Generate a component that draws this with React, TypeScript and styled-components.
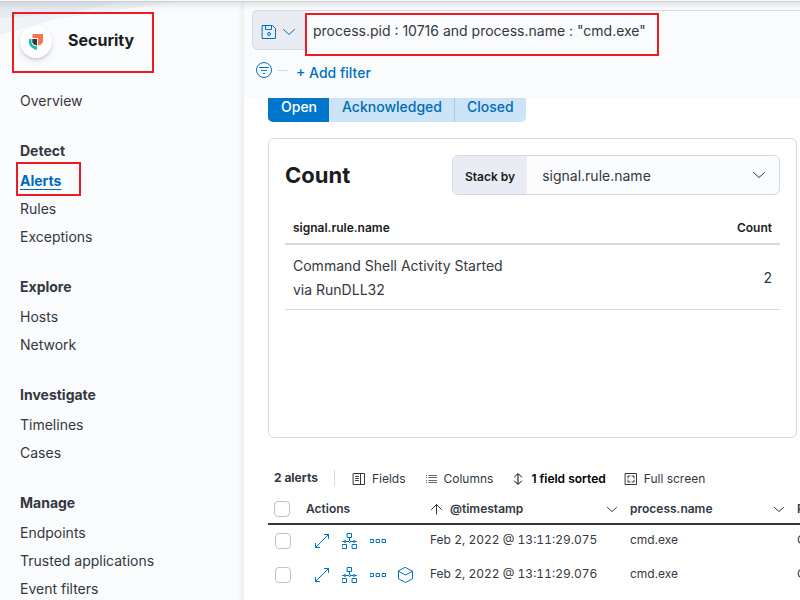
import React from "react";
import styled, { createGlobalStyle, css } from "styled-components";

const Global = createGlobalStyle`
  *, *::before, *::after { box-sizing: border-box; }
  body {
    margin: 0;
    background: #fff;
    color: #343741;
    font-family: Inter, "Open Sans", sans-serif;
    font-size: 14px;
    line-height: 24px;
    overflow: hidden;
  }
  button, input, select { font: inherit; color: inherit; }
  button { padding: 0; border: 0; background: none; cursor: pointer; }
  svg { display: block; flex: none; }
`;

const Page = styled.div`
  position: relative;
  display: grid;
  grid-template-columns: 244px minmax(0, 1fr);
  height: 100vh;
  padding-top: 2px;
  overflow: hidden;
`;

const TopShade = styled.div`
  position: absolute;
  inset: 0 0 auto;
  height: 10px;
  z-index: 3;
  pointer-events: none;
  background: linear-gradient(rgba(70, 90, 90, 0.14), rgba(70, 90, 90, 0));
  border-top: 1px solid #f7f9f9;
  &::after {
    content: "";
    display: block;
    height: 1px;
    background: #c9d1d3;
  }
`;

const Sidebar = styled.aside`
  position: relative;
  padding: 10px 12px 0;
  overflow: hidden;
  background: linear-gradient(to left, #eceef1, #fafbfd 6px);
`;

const Backdrop = styled.svg`
  position: absolute;
  top: 0;
  left: 0;
`;

const highlight = css`
  border: 2px solid #ec1c24;
`;

const Brand = styled.header`
  ${highlight}
  position: relative;
  display: flex;
  align-items: flex-start;
  gap: 16px;
  width: 142px;
  height: 61px;
  padding: 12px 6px;
`;

const BrandIcon = styled.span`
  display: grid;
  place-items: center;
  width: 32px;
  height: 32px;
  border-radius: 50%;
  background: #fff;
  box-shadow: 0 2px 3px rgba(60, 70, 90, 0.2), 0 4px 8px rgba(60, 70, 90, 0.06);
`;

const BrandName = styled.h1`
  margin: 0;
  color: #1a1c21;
  font-size: 16px;
  line-height: 28px;
  font-weight: 700;
`;

const Nav = styled.nav`
  display: flex;
  flex-direction: column;
  gap: 24px;
  padding: 14px 8px 0;
`;

const NavTitle = styled.h2`
  margin: 0 0 4px;
  font-size: 14px;
  line-height: 24px;
  font-weight: 700;
`;

const NavList = styled.ul`
  margin: 0;
  padding: 0;
  list-style: none;
`;

const NavLink = styled.a<{ $active?: boolean }>`
  position: relative;
  display: block;
  width: fit-content;
  line-height: 28px;
  white-space: nowrap;
  color: ${(p) => (p.$active ? "#006bb8" : "#343741")};
  font-weight: ${(p) => (p.$active ? 700 : 400)};
  text-decoration: ${(p) => (p.$active ? "underline" : "none")};
  text-underline-offset: 3px;
  ${(p) =>
    p.$active &&
    css`
      &::after {
        content: "";
        position: absolute;
        inset: -5px -20px -1px -4px;
        ${highlight}
      }
    `}
`;

const Main = styled.main`
  display: flex;
  flex-direction: column;
  min-width: 0;
  overflow: hidden;
`;

const SearchArea = styled.section`
  flex: none;
  height: 96px;
  padding: 8px 0 0 8px;
  background: #fafbfd;
`;

const QueryBar = styled.div`
  display: flex;
  height: 40px;
  border-top: 1px solid #d3dae6;
  border-top-left-radius: 6px;
`;

const SavedQuery = styled.button`
  display: flex;
  align-items: center;
  gap: 4px;
  width: 54px;
  margin-top: -1px;
  padding: 3px 0 0 8px;
  color: #0071c2;
  background: #e9edf3;
  border: 1px solid #d3dae6;
  border-right: 0;
  border-radius: 6px 0 0 6px;
`;

const QueryInput = styled.div`
  position: relative;
  flex: 1;
  input {
    width: 100%;
    height: 38px;
    padding: 0 8px 0 7px;
    border: 0;
    outline: 0;
    background: transparent;
  }
  &::after {
    content: "";
    position: absolute;
    top: 2px;
    left: -1px;
    width: 354px;
    height: 43px;
    pointer-events: none;
    ${highlight}
  }
`;

const FilterRow = styled.div`
  display: flex;
  align-items: center;
  height: 40px;
  padding: 0 4px;
  color: #0071c2;
`;

const FilterDash = styled.span`
  width: 10px;
  height: 1px;
  margin: 0 8px 0 6px;
  background: #d3dae6;
`;

const AddFilter = styled.button`
  padding-top: 5px;
  font-weight: 500;
`;

const Content = styled.div`
  flex: 1;
  min-height: 0;
  padding: 0 3px 0 24px;
`;

const StatusGroup = styled.div`
  display: flex;
  align-items: flex-end;
  width: fit-content;
  height: 24px;
  overflow: hidden;
  border-radius: 0 0 5px 5px;
`;

const StatusButton = styled.button<{ $selected?: boolean }>`
  height: 30px;
  padding: 0 12px;
  font-weight: 500;
  color: ${(p) => (p.$selected ? "#fff" : "#006bb8")};
  background: ${(p) => (p.$selected ? "#0077cc" : "#cce4f5")};
  border-left: 1px solid ${(p) => (p.$selected ? "#0077cc" : "#cce4f5")};
  &:last-child { border-left-color: #a3cdee; }
`;

const Panel = styled.section`
  min-height: 300px;
  margin-top: 16px;
  padding: 16px;
  border: 1px solid #d3dae6;
  border-radius: 6px;
`;

const PanelHead = styled.div`
  display: flex;
  align-items: center;
  justify-content: space-between;
`;

const PanelTitle = styled.h2`
  margin: 0;
  color: #1a1c21;
  font-size: 22px;
  line-height: 32px;
  font-weight: 700;
`;

const StackBy = styled.div`
  display: flex;
  position: relative;
  width: 328px;
  height: 40px;
  overflow: hidden;
  color: #343741;
  background: #fbfcfd;
  border: 1px solid #d3dae6;
  border-radius: 6px;
  label {
    padding: 2px 12px 0;
    color: #1a1c21;
    background: #e9edf3;
    font-size: 12px;
    line-height: 38px;
    font-weight: 600;
    white-space: nowrap;
  }
  select {
    flex: 1;
    min-width: 0;
    padding: 2px 40px 0 15px;
    appearance: none;
    border: 0;
    outline: 0;
    background: transparent;
  }
  svg {
    position: absolute;
    top: 11px;
    right: 12px;
    pointer-events: none;
  }
`;

const CountTable = styled.table`
  width: 100%;
  margin-top: 16px;
  border-collapse: collapse;
  th {
    padding: 5px 8px 3px;
    color: #1a1c21;
    border-bottom: 2px solid #d3dae6;
    font-size: 12px;
    font-weight: 600;
    text-align: left;
  }
  td {
    padding: 9px 8px 7px;
    border-bottom: 1px solid #d3dae6;
  }
  td:first-child { width: 50%; }
  th:last-child, td:last-child { text-align: right; }
`;

const Toolbar = styled.div`
  display: flex;
  align-items: center;
  height: 24px;
  margin-top: 28px;
  padding-left: 6px;
  font-size: 12px;
  white-space: nowrap;
`;

const AlertTotal = styled.strong`
  padding-right: 16px;
  font-weight: 700;
`;

const Divider = styled.span`
  width: 1px;
  height: 16px;
  margin-right: 17px;
  background: #d3dae6;
`;

const ToolButton = styled.button<{ $strong?: boolean }>`
  display: flex;
  align-items: center;
  gap: 6px;
  margin-right: 18px;
  padding-top: 2px;
  ${(p) => p.$strong && css`color: #000; font-weight: 600;`}
`;

const Grid = styled.table`
  width: 700px;
  table-layout: fixed;
  border-collapse: separate;
  border-spacing: 0;
  font-size: 12px;
  th {
    height: 35px;
    padding: 4px 0 0;
    border-bottom: 2px solid #343741;
    font-weight: 600;
    text-align: left;
  }
  td {
    height: 34px;
    padding: 0 0 4px;
    white-space: nowrap;
    font-feature-settings: "tnum";
  }
`;

const HeadCell = styled.div`
  display: flex;
  align-items: center;
  gap: 6px;
  padding-right: 12px;
  svg:last-child { margin-left: auto; }
`;

const Check = styled.input<{ $head?: boolean }>`
  display: block;
  appearance: none;
  width: 16px;
  height: 16px;
  margin: ${(p) => (p.$head ? "0 0 0 6px" : "2px 0 0 7px")};
  border: 1px solid #c2c3c6;
  border-radius: 4px;
  background: #fff;
`;

const Actions = styled.div`
  display: flex;
  align-items: center;
  gap: 12px;
  padding: 2px 0 0 8px;
  color: #0071c2;
`;

const Icon = ({ d, size = 16 }: { d: string; size?: number }) => (
  <svg width={size} height={size} viewBox={`0 0 ${size} ${size}`} fill="none" stroke="currentColor" aria-hidden="true">
    <path d={d} strokeLinecap="round" strokeLinejoin="round" />
  </svg>
);

const paths = {
  save: "M1.5 1.5h10l3 3v10h-13zM4.500 1.500v4h6v-4M8 8.500a1.500 1.500 0 1 0 0 3 1.500 1.500 0 0 0 0-3z",
  down: "M2.5 5.5L8 10.5l5.5-5",
  downSmall: "M1.500 4.500L6 8.500l4.500-4",
  up: "M6.500 12V2.500M1.500 7.500l5-5 5 5",
  filter: "M8 .5a7.5 7.5 0 1 0 0 15 7.5 7.5 0 0 0 0-15zM3.5 5.5h9M5.500 8.5h5M7.500 11.5h1",
  fields: "M1.500 1.500h11v11h-11zM8.500 1.500v11M3.500 4.500h3M3.500 6.500h3M3.500 8.500h3",
  sort: "M7 2.500v9M3.500 5L7 1.500 10.500 5M3.500 9L7 12.500 10.500 9",
  full: "M1.500 1.500h11v11h-11zM4 6V4h2M8 4h2v2M10 8v2H8M6 10H4V8",
  expand: "M1.500 14.500L14.500 1.500M10.500 1.500h4v4M1.500 10.500v4h4",
  tree: "M5.500 .5h4v4h-4zM7.500 4.500v3M.5 8.500h1.500M4 8.500h2.500M8.500 8.500h2.500M13 8.500h1.500M2 8.500a1 1 0 1 0 2 0 1 1 0 0 0-2 0zM6.500 8.500a1 1 0 1 0 2 0 1 1 0 0 0-2 0zM11 8.500a1 1 0 1 0 2 0 1 1 0 0 0-2 0zM.5 11.500h4v4h-4zM10.500 11.500h4v4h-4z",
  more: "M.5 6.5h3v3h-3zM6.5 6.5h3v3h-3zM12.5 6.5h3v3h-3z",
  cube: "M7.500 .5l7 3.700v7.600l-7 3.700-7-3.700V4.200zM.8 4.400L7.500 8l6.700-3.600",
};

const ListIcon = () => (
  <svg width="14" height="14" viewBox="0 0 14 14" fill="none" stroke="currentColor" aria-hidden="true">
    <path d="M2 3.500h1M4.500 3.500H13M2 5.500h1M4.500 5.500H13M2 8.500h1M4.500 8.500H13M2 10.500h1M4.500 10.500H13" strokeOpacity="0.75" />
  </svg>
);

const Shield = () => (
  <svg width="16" height="18" viewBox="0 0 16 18" aria-hidden="true">
    <path fill="#fa744e" d="M4.500 1H15v7c0 2.500-2 4-5 4.500V5H4.500z" />
    <path fill="#1dbab0" d="M1 6h2.500v3c0 2.500 2 4 5.500 4.500V17c-5-1.500-8-4-8-8z" />
    <path fill="#343741" d="M4.300 6H9v6.500c-3-.5-4.700-2-4.700-4z" />
  </svg>
);

const sections = [
  { title: "Detect", items: ["Alerts", "Rules", "Exceptions"] },
  { title: "Explore", items: ["Hosts", "Network"] },
  { title: "Investigate", items: ["Timelines", "Cases"] },
  { title: "Manage", items: ["Endpoints", "Trusted applications", "Event filters"] },
];

const alerts = [
  { time: "Feb 2, 2022 @ 13:11:29.075", name: "cmd.exe", session: false },
  { time: "Feb 2, 2022 @ 13:11:29.076", name: "cmd.exe", session: true },
];

export default function App() {
  return (
    <Page>
      <Global />
      <TopShade />
      <Sidebar>
        <Backdrop width="244" height="34" viewBox="0 0 244 34" aria-hidden="true">
          <path d="M0 0h175L60 16 0 33z" fill="#eff2f6" />
          <path d="M0 0h120L70 11 0 16z" fill="#e5e9f0" />
        </Backdrop>
        <Brand>
          <BrandIcon><Shield /></BrandIcon>
          <BrandName>Security</BrandName>
        </Brand>
        <Nav aria-label="Security">
          <NavLink href="#overview">Overview</NavLink>
          {sections.map((s) => (
            <section key={s.title}>
              <NavTitle>{s.title}</NavTitle>
              <NavList>
                {s.items.map((item) => (
                  <li key={item}>
                    <NavLink href={"#" + item.toLowerCase().replace(" ", "-")} $active={item === "Alerts"}>{item}</NavLink>
                  </li>
                ))}
              </NavList>
            </section>
          ))}
        </Nav>
      </Sidebar>
      <Main>
        <SearchArea>
          <QueryBar>
            <SavedQuery aria-label="Saved queries">
              <Icon d={paths.save} />
              <Icon d={paths.down} />
            </SavedQuery>
            <QueryInput>
              <input aria-label="Search query" defaultValue={'process.pid : 10716 and process.name : "cmd.exe"'} />
            </QueryInput>
          </QueryBar>
          <FilterRow>
            <Icon d={paths.filter} />
            <FilterDash />
            <AddFilter>+ Add filter</AddFilter>
          </FilterRow>
        </SearchArea>
        <Content>
          <StatusGroup>
            <StatusButton $selected>Open</StatusButton>
            <StatusButton>Acknowledged</StatusButton>
            <StatusButton>Closed</StatusButton>
          </StatusGroup>
          <Panel>
            <PanelHead>
              <PanelTitle>Count</PanelTitle>
              <StackBy>
                <label htmlFor="stack-by">Stack by</label>
                <select id="stack-by">
                  <option>signal.rule.name</option>
                </select>
                <Icon d={paths.down} />
              </StackBy>
            </PanelHead>
            <CountTable>
              <thead>
                <tr><th>signal.rule.name</th><th>Count</th></tr>
              </thead>
              <tbody>
                <tr><td>Command Shell Activity Started via RunDLL32</td><td>2</td></tr>
              </tbody>
            </CountTable>
          </Panel>
          <Toolbar>
            <AlertTotal>2 alerts</AlertTotal>
            <Divider />
            <ToolButton><Icon d={paths.fields} size={14} />Fields</ToolButton>
            <ToolButton><ListIcon />Columns</ToolButton>
            <ToolButton $strong><Icon d={paths.sort} size={14} />1 field sorted</ToolButton>
            <ToolButton><Icon d={paths.full} size={14} />Full screen</ToolButton>
          </Toolbar>
          <Grid>
            <colgroup>
              <col width="38" /><col width="124" /><col width="200" /><col width="167" /><col width="171" />
            </colgroup>
            <thead>
              <tr>
                <th><Check $head type="checkbox" aria-label="Select all alerts" /></th>
                <th>Actions</th>
                <th><HeadCell><Icon d={paths.up} size={14} />@timestamp<Icon d={paths.downSmall} size={12} /></HeadCell></th>
                <th><HeadCell>process.name<Icon d={paths.downSmall} size={12} /></HeadCell></th>
                <th>Rule</th>
              </tr>
            </thead>
            <tbody>
              {alerts.map((a) => (
                <tr key={a.time}>
                  <td><Check type="checkbox" aria-label={"Select alert " + a.time} /></td>
                  <td>
                    <Actions>
                      <button aria-label="View details"><Icon d={paths.expand} /></button>
                      <button aria-label="Analyze event"><Icon d={paths.tree} /></button>
                      <button aria-label="More actions"><Icon d={paths.more} /></button>
                      {a.session && <button aria-label="Investigate in timeline"><Icon d={paths.cube} /></button>}
                    </Actions>
                  </td>
                  <td>{a.time}</td>
                  <td>{a.name}</td>
                  <td>Command Shell</td>
                </tr>
              ))}
            </tbody>
          </Grid>
        </Content>
      </Main>
    </Page>
  );
}
